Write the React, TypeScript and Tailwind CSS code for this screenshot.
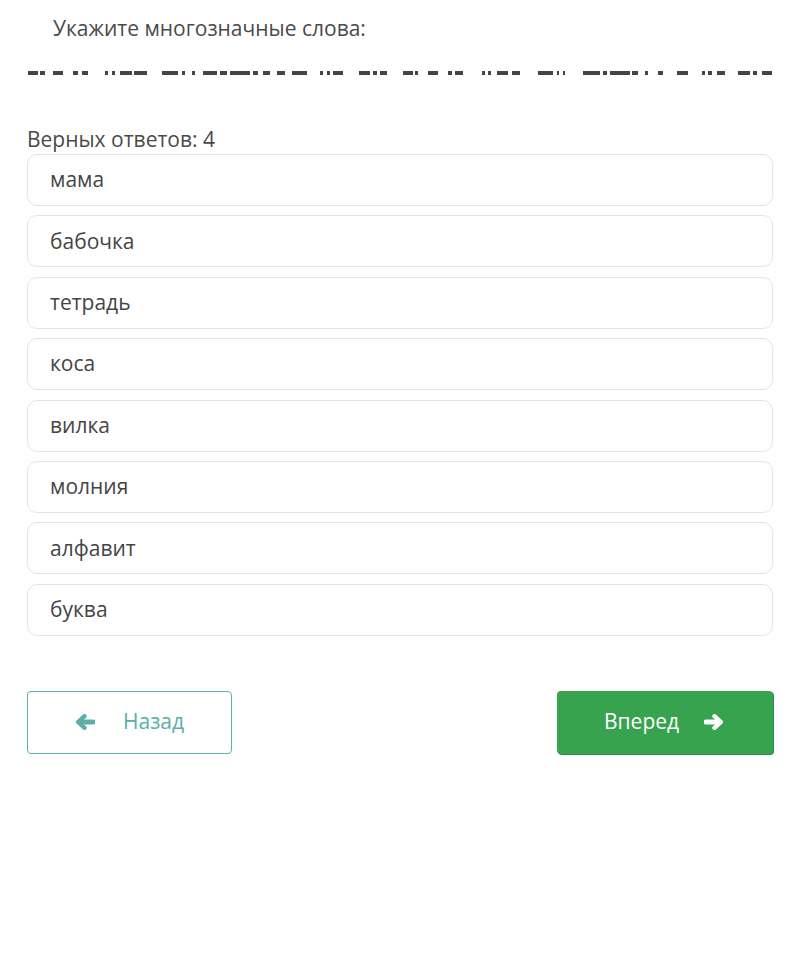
const options = [
  'мама',
  'бабочка',
  'тетрадь',
  'коса',
  'вилка',
  'молния',
  'алфавит',
  'буква',
];

// hidden blanks of the sentence: [x, width]
const blanks: [number, number][] = [
  [28, 10], [40, 5], [53, 10], [73, 5], [82, 6],
  [105, 3], [112, 3], [120, 12], [134, 13], [162, 16], [182, 3], [192, 3],
  [203, 14], [220, 7], [230, 20], [253, 5], [263, 7], [277, 8], [292, 15],
  [320, 3], [327, 3], [333, 10],
  [359, 11], [373, 4], [380, 7],
  [403, 10], [415, 3], [428, 10], [448, 4], [455, 8],
  [482, 3], [488, 3], [497, 11], [512, 8],
  [538, 15], [557, 2], [563, 2], [583, 17], [603, 4], [610, 20], [632, 6],
  [645, 3], [658, 5], [677, 11],
  [702, 3], [708, 4], [717, 8],
  [738, 12], [753, 4], [762, 10],
];

function Blanks() {
  return (
    <svg width="746" height="5" viewBox="0 0 746 5" className="block">
      {blanks.map(([x, w]) => (
        <rect key={x} x={x - 27} y="0" width={w} height="4" fill="#444" />
      ))}
    </svg>
  );
}

function Arrow({ dir, className }: { dir: 'left' | 'right'; className?: string }) {
  return (
    <svg
      width="20"
      height="16"
      viewBox="0 0 20 16"
      className={className}
      style={dir === 'right' ? { transform: 'scaleX(-1)' } : undefined}
    >
      <path
        d="M9.5 2.2 L3.2 8 L9.5 13.8"
        fill="none"
        stroke="currentColor"
        strokeWidth="4.4"
        strokeLinecap="round"
        strokeLinejoin="round"
      />
      <path
        d="M4 8 H18"
        fill="none"
        stroke="currentColor"
        strokeWidth="5"
        strokeLinecap="round"
      />
    </svg>
  );
}

function Option({ text }: { text: string }) {
  return (
    <div className="flex h-[52px] items-center rounded-[10px] border border-[#e1e6e6] bg-white pl-[22px] text-[21px] text-[#454545]">
      {text}
    </div>
  );
}

export default function App() {
  return (
    <div
      className="min-h-[957px] w-[796px] bg-white pl-[27px] pr-[23px]"
      style={{ fontFamily: '"Open Sans", "Noto Sans", sans-serif' }}
    >
      <div className="pl-[26px] pt-[14px] text-[21px] leading-[28px] text-[#4a4a4a]">
        Укажите многозначные слова:
      </div>
      <div className="mt-[29px]">
        <Blanks />
      </div>
      <div className="mt-[49px] text-[21px] leading-[28px] text-[#4a4a4a]">
        Верных ответов: 4
      </div>
      <div className="mt-px flex flex-col gap-[9.4px]">
        {options.map((o) => (
          <Option key={o} text={o} />
        ))}
      </div>
      <div className="mt-[55px] flex justify-between">
        <button
          type="button"
          className="flex h-[63px] w-[205px] items-center rounded-[4px] border border-[#5cb4ae] bg-white pl-[47px] text-[21px] text-[#5aafa8]"
        >
          <Arrow dir="left" />
          <span className="ml-[28px]">Назад</span>
        </button>
        <button
          type="button"
          className="flex h-[63px] w-[216px] items-center rounded-[4px] bg-[#37a34e] pl-[47px] text-[21px] text-white shadow-[1px_1px_0_#2e8c42]"
        >
          <span>Вперед</span>
          <Arrow dir="right" className="ml-[25px]" />
        </button>
      </div>
    </div>
  );
}
